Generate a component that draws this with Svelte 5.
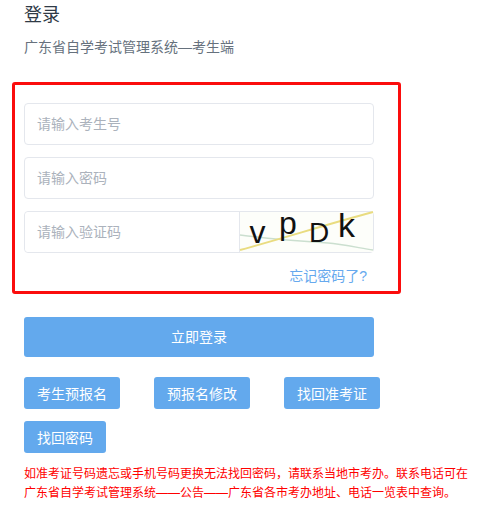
<script lang="ts">
	const links = ['考生预报名', '预报名修改', '找回准考证', '找回密码'];
</script>

<main class="login">
	<h1>登录</h1>
	<p class="subtitle">广东省自学考试管理系统—考生端</p>

	<form class="login-form" onsubmit={(event) => event.preventDefault()}>
		<input placeholder="请输入考生号" />
		<input type="password" placeholder="请输入密码" />
		<div class="captcha-row">
			<input placeholder="请输入验证码" />
			<svg class="captcha" viewBox="0 0 133 40" width="133" height="40" role="img" aria-label="验证码">
				<rect width="133" height="40" fill="#fdfefa" />
				<path d="M0 23 C16 25 32 27 47 28 S75 30 88 31 S120 36 133 38" fill="none" stroke="#cbdfcf" stroke-width="1.4" />
				<path d="M0 38 C44 26 88 12 133 0" fill="none" stroke="#e9dc80" stroke-width="2" />
				<text x="9.5" y="31" class="glyph">v</text>
				<text x="39" y="22" class="glyph">p</text>
				<text x="69" y="30" class="glyph cap">D</text>
				<text x="98" y="25" class="glyph tall">k</text>
			</svg>
		</div>
		<a class="forgot" href="#forgot">忘记密码了?</a>
	</form>

	<button class="submit" type="button">立即登录</button>

	<div class="links">
		{#each links as link}
			<button type="button">{link}</button>
		{/each}
	</div>

	<p class="notice">
		如准考证号码遗忘或手机号码更换无法找回密码，请联系当地市考办。联系电话可在<br />
		广东省自学考试管理系统——公告——广东省各市考办地址、电话一览表中查询。
	</p>
</main>

<style>
	:global(body) {
		margin: 0;
		background: #fff;
	}

	.login {
		box-sizing: border-box;
		width: 494px;
		height: 511px;
		overflow: hidden;
		padding: 3px 0 0 24px;
		font-family: 'Liberation Sans', 'Noto Sans CJK SC', sans-serif;
	}

	h1 {
		margin: 0;
		font-size: 18px;
		font-weight: 400;
		line-height: 24px;
		color: #2f3a46;
	}

	.subtitle {
		margin: 10px 0 0;
		font-size: 14px;
		line-height: 20px;
		color: #66717d;
	}

	.login-form {
		box-sizing: border-box;
		display: flex;
		flex-direction: column;
		gap: 12px;
		width: 389px;
		height: 212px;
		margin: 25px 0 0 -12px;
		padding: 18px 24px 0 9px;
		border: 3px solid #fb0d0d;
		border-radius: 3px;
	}

	input {
		box-sizing: border-box;
		width: 350px;
		height: 42px;
		padding: 0 11px 0 12px;
		border: 1px solid #e4e7ed;
		border-radius: 4px;
		outline: none;
		font: inherit;
		font-size: 14px;
		color: #606266;
		background: #fff;
	}

	input::placeholder {
		color: #abb2bc;
		opacity: 1;
	}

	.captcha-row {
		display: flex;
		width: 350px;
		height: 42px;
		box-sizing: border-box;
		border: 1px solid #e4e7ed;
		border-radius: 4px;
	}

	.captcha-row input {
		flex: 1;
		width: auto;
		min-width: 0;
		height: 40px;
		border: 0;
		border-right: 1px solid #e4e7ed;
		border-radius: 4px 0 0 4px;
	}

	.captcha {
		flex: none;
		width: 133px;
		height: 40px;
		overflow: visible;
	}

	.glyph {
		font-family: 'Liberation Sans', sans-serif;
		font-size: 32px;
		fill: #111;
	}

	.glyph.cap {
		font-size: 28px;
	}

	.glyph.tall {
		font-size: 34px;
	}

	.forgot {
		align-self: flex-end;
		margin: 1px 7px 0 0;
		font-size: 14px;
		line-height: 20px;
		color: #66a9ee;
		text-decoration: none;
	}

	button {
		border: 0;
		border-radius: 3px;
		padding: 0;
		font: inherit;
		font-size: 14px;
		color: #fff;
		background: #63a9ed;
		cursor: pointer;
	}

	.submit {
		display: block;
		width: 350px;
		height: 40px;
		margin-top: 23px;
		padding-bottom: 2px;
	}

	.links {
		display: flex;
		flex-wrap: wrap;
		gap: 12px 34px;
		width: 370px;
		margin-top: 20px;
	}

	.links button {
		height: 32px;
		padding: 0 13px;
	}

	.notice {
		margin: 12px 0 0;
		font-size: 12px;
		line-height: 19px;
		color: #f00;
		white-space: nowrap;
	}
</style>
